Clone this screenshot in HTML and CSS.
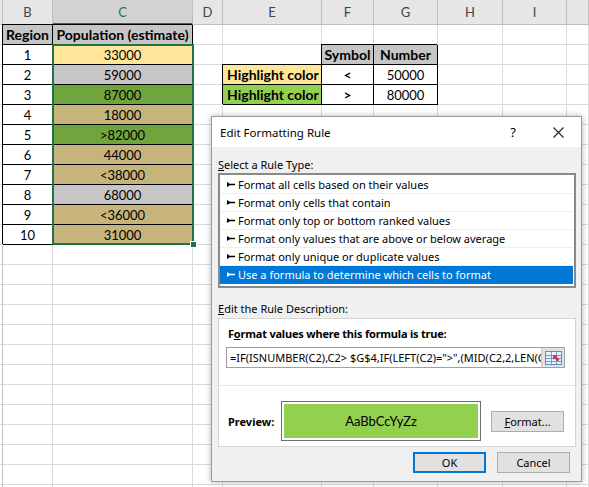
FILE: index.html
```html
<!DOCTYPE html>
<html lang="en">
<head>
    <meta charset="UTF-8">
    <title>Edit Formatting Rule</title>
    <link rel="stylesheet" href="styles.css">
</head>
<body>
    <div class="sheet">
        <div class="hd rh"></div><div class="hd">B</div><div class="hd sel">C</div><div class="hd">D</div><div class="hd">E</div><div class="hd">F</div><div class="hd">G</div><div class="hd">H</div><div class="hd">I</div><div class="hd"></div>

        <div class="rh"></div><div class="box b head">Region</div><div class="box b head">Population (estimate)</div><div></div><div></div><div></div><div></div><div></div><div></div><div></div>
        <div class="rh"></div><div class="box">1</div><div class="box yellow">33000</div><div></div><div></div><div class="box b head">Symbol</div><div class="box b head">Number</div><div></div><div></div><div></div>
        <div class="rh"></div><div class="box">2</div><div class="box grey">59000</div><div></div><div class="box b l yellow">Highlight color</div><div class="box b">&lt;</div><div class="box">50000</div><div></div><div></div><div></div>
        <div class="rh"></div><div class="box">3</div><div class="box green">87000</div><div></div><div class="box b l lime">Highlight color</div><div class="box b">&gt;</div><div class="box">80000</div><div></div><div></div><div></div>
        <div class="rh"></div><div class="box">4</div><div class="box tan">18000</div><div></div><div></div><div></div><div></div><div></div><div></div><div></div>
        <div class="rh"></div><div class="box">5</div><div class="box green">&gt;82000</div><div></div><div></div><div></div><div></div><div></div><div></div><div></div>
        <div class="rh"></div><div class="box">6</div><div class="box tan">44000</div><div></div><div></div><div></div><div></div><div></div><div></div><div></div>
        <div class="rh"></div><div class="box">7</div><div class="box tan">&lt;38000</div><div></div><div></div><div></div><div></div><div></div><div></div><div></div>
        <div class="rh"></div><div class="box">8</div><div class="box grey">68000</div><div></div><div></div><div></div><div></div><div></div><div></div><div></div>
        <div class="rh"></div><div class="box">9</div><div class="box tan">&lt;36000</div><div></div><div></div><div></div><div></div><div></div><div></div><div></div>
        <div class="rh"></div><div class="box">10</div><div class="box tan">31000</div><div></div><div></div><div></div><div></div><div></div><div></div><div></div>

        <div class="rh"></div><div></div><div></div><div></div><div></div><div></div><div></div><div></div><div></div><div></div>
        <div class="rh"></div><div></div><div></div><div></div><div></div><div></div><div></div><div></div><div></div><div></div>
        <div class="rh"></div><div></div><div></div><div></div><div></div><div></div><div></div><div></div><div></div><div></div>
        <div class="rh"></div><div></div><div></div><div></div><div></div><div></div><div></div><div></div><div></div><div></div>
        <div class="rh"></div><div></div><div></div><div></div><div></div><div></div><div></div><div></div><div></div><div></div>
        <div class="rh"></div><div></div><div></div><div></div><div></div><div></div><div></div><div></div><div></div><div></div>
        <div class="rh"></div><div></div><div></div><div></div><div></div><div></div><div></div><div></div><div></div><div></div>
        <div class="rh"></div><div></div><div></div><div></div><div></div><div></div><div></div><div></div><div></div><div></div>
        <div class="rh"></div><div></div><div></div><div></div><div></div><div></div><div></div><div></div><div></div><div></div>
        <div class="rh"></div><div></div><div></div><div></div><div></div><div></div><div></div><div></div><div></div><div></div>
        <div class="rh"></div><div></div><div></div><div></div><div></div><div></div><div></div><div></div><div></div><div></div>
        <div class="rh"></div><div></div><div></div><div></div><div></div><div></div><div></div><div></div><div></div><div></div>
        <div class="rh"></div><div></div><div></div><div></div><div></div><div></div><div></div><div></div><div></div><div></div>

        <span class="selection"></span>
    </div>

    <div class="dialog">
        <div class="titlebar">
            <span class="title">Edit Formatting Rule</span>
            <span class="help">?</span>
            <span class="close">
                <svg width="11" height="11" viewBox="0 0 11 11"><path d="M0.5 0.5L10.5 10.5M10.5 0.5L0.5 10.5" stroke="#222" stroke-width="1.1" fill="none"/></svg>
            </span>
        </div>

        <div class="dialog-body">
            <div class="label"><u>S</u>elect a Rule Type:</div>
            <ul class="rule-list">
                <li><span class="arrow"></span>Format all cells based on their values</li>
                <li><span class="arrow"></span>Format only cells that contain</li>
                <li><span class="arrow"></span>Format only top or bottom ranked values</li>
                <li><span class="arrow"></span>Format only values that are above or below average</li>
                <li><span class="arrow"></span>Format only unique or duplicate values</li>
                <li class="active"><span class="arrow"></span>Use a formula to determine which cells to format</li>
            </ul>

            <div class="label label-desc"><u>E</u>dit the Rule Description:</div>
            <div class="group">
                <div class="group-title">F<u>o</u>rmat values where this formula is true:</div>
                <div class="formula">
                    <span class="formula-text">=IF(ISNUMBER(C2),C2&gt; $G$4,IF(LEFT(C2)="&gt;",(MID(C2,2,LEN(C2)-1)+0)&gt;$G$4))</span>
                    <span class="ref-btn">
                        <svg width="17" height="14" viewBox="0 0 17 14">
                            <rect x="0.5" y="0.5" width="16" height="13" fill="#eaf1fb" stroke="#5b8fd0"/>
                            <path d="M1 4.5H16M1 7.5H16M1 10.5H16M6.5 1V13M11.5 1V13" stroke="#6d9ddb" fill="none"/>
                            <path d="M8 4L13 4L11.5 5.5L14.5 8.5L12.5 10.5L9.5 7.5L8 9Z" fill="#e0342c"/>
                        </svg>
                    </span>
                </div>
                <div class="sep"></div>
                <div class="preview-row">
                    <span class="preview-label">Preview:</span>
                    <div class="preview-box"><div class="preview-swatch">AaBbCcYyZz</div></div>
                    <button class="btn btn-format"><u>F</u>ormat...</button>
                </div>
            </div>

            <div class="actions">
                <button class="btn btn-default">OK</button>
                <button class="btn">Cancel</button>
            </div>
        </div>
    </div>
</body>
</html>
```

FILE: styles.css
```css
body {
    margin: 0;
    width: 589px;
    height: 487px;
    overflow: hidden;
    position: relative;
    background: #fff;
}

/* spreadsheet */

.sheet {
    position: relative;
    display: grid;
    grid-template-columns: 3px 50px 140px 30px 99px 52px 64px 65px 64px 22px;
    grid-template-rows: 25px;
    grid-auto-rows: 20px;
    font-family: Lato, "Liberation Sans", sans-serif;
    font-size: 13px;
    color: #000;
}

.sheet > div {
    box-sizing: border-box;
    border-right: 1px solid #dadada;
    border-bottom: 1px solid #dadada;
    display: flex;
    align-items: center;
    justify-content: center;
    white-space: nowrap;
    overflow: hidden;
}

.sheet > .hd {
    background: #e6e6e6;
    border-right-color: #bfbfbf;
    border-bottom-color: #bfbfbf;
    color: #444;
}

.sheet > .hd.sel {
    background: #d2d2d2;
    color: #217346;
    border-bottom: 2px solid #217346;
}

.sheet > .rh {
    border-right-color: #bfbfbf;
}

.sheet > .box {
    border-right-color: #000;
    border-bottom-color: #000;
    box-shadow: -1px -1px 0 #000;
}

.b {
    font-weight: bold;
    font-size: 14px;
}

.sheet > .l {
    justify-content: flex-start;
    padding-left: 4px;
}

.head { background: #c6c6c6; }
.yellow { background: #ffe699; }
.grey { background: #c6c6c6; }
.green { background: #70a43c; }
.tan { background: #c6b47a; }
.lime { background: #92d050; }

.selection {
    position: absolute;
    grid-column: 3 / 4;
    grid-row: 3 / 13;
    top: -1px;
    left: -1px;
    right: -1px;
    bottom: 0;
    border: 2px solid #217346;
}

.selection::after {
    content: "";
    position: absolute;
    right: -5px;
    bottom: -5px;
    width: 5px;
    height: 5px;
    background: #217346;
    border: 1px solid #fff;
}

/* dialog */

.dialog {
    position: absolute;
    left: 211px;
    top: 116px;
    width: 371px;
    height: 366px;
    box-sizing: border-box;
    border: 1px solid #9a9a9a;
    background: #f0f0f0;
    box-shadow: 0 0 6px rgba(0, 0, 0, 0.3);
    font-family: "Noto Sans", "Open Sans", sans-serif;
    font-size: 11px;
    color: #000;
}

.titlebar {
    height: 30px;
    background: #fff;
    display: flex;
    align-items: center;
    padding-left: 8px;
}

.title {
    flex: 1;
    font-size: 11.5px;
}

.help {
    width: 14px;
    text-align: center;
    font-size: 13px;
    margin-right: 33px;
}

.close {
    display: flex;
    margin-right: 17px;
}

.dialog-body {
    padding: 10px 5px 0 6px;
}

.label {
    line-height: 16px;
}

.label-desc {
    margin-top: 13px;
}

.rule-list {
    list-style: none;
    margin: 0;
    padding: 1px 1px 2px 0;
    height: 115px;
    box-sizing: border-box;
    border: 2px solid #8a8a8a;
    background: #fff;
}

.rule-list li {
    height: 18px;
    box-sizing: border-box;
    border-bottom: 1px solid #eeeeee;
    display: flex;
    align-items: center;
    padding-left: 7px;
    white-space: nowrap;
}

.rule-list li.active {
    background: #0078d7;
    color: #fff;
    border-bottom-color: #0078d7;
}

.arrow {
    width: 8px;
    height: 5px;
    margin-right: 3px;
    background: currentColor;
    clip-path: polygon(0 0, 35% 35%, 100% 35%, 100% 65%, 35% 65%, 0 100%);
}

.group {
    margin-top: 1px;
    height: 129px;
    box-sizing: border-box;
    border: 1px solid #d5d5d5;
    background: #fff;
    padding-top: 7px;
}

.group-title {
    font-weight: bold;
    line-height: 16px;
    padding-left: 9px;
    letter-spacing: -0.2px;
}

.formula {
    display: flex;
    height: 21px;
    box-sizing: border-box;
    margin: 5px 10px 0 7px;
    border: 1px solid #a0a0a0;
    background: #fff;
}

.formula-text {
    flex: 1;
    overflow: hidden;
    white-space: nowrap;
    padding-left: 3px;
    line-height: 19px;
}

.ref-btn {
    width: 22px;
    background: #e1e1e1;
    border-left: 1px solid #c8c8c8;
    display: flex;
    align-items: center;
    justify-content: center;
}

.sep {
    margin-top: 17px;
    border-top: 1px solid #e3e3e3;
}

.preview-row {
    display: flex;
    align-items: center;
    margin-top: 15px;
    padding-left: 9px;
}

.preview-label {
    width: 53px;
    font-weight: bold;
}

.preview-box {
    width: 200px;
    height: 40px;
    box-sizing: border-box;
    border: 1px solid #6e6e6e;
    padding: 2px;
}

.preview-swatch {
    height: 100%;
    background: #92d050;
    display: flex;
    align-items: center;
    justify-content: center;
    font-family: Lato, "Liberation Sans", sans-serif;
    font-size: 13px;
}

.btn {
    width: 73px;
    height: 21px;
    box-sizing: border-box;
    border: 1px solid #adadad;
    background: #e1e1e1;
    font-family: "Noto Sans", "Open Sans", sans-serif;
    font-size: 11px;
    color: #000;
    padding: 0;
}

.btn-format {
    margin-left: 10px;
}

.btn-default {
    border: 2px solid #0078d7;
}

.actions {
    display: flex;
    justify-content: flex-end;
    gap: 11px;
    margin-top: 5px;
    padding-right: 6px;
}
```
